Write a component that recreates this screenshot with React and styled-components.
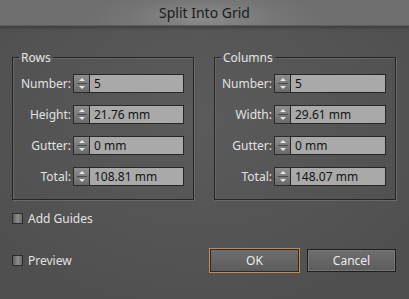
import React from 'react';
import styled, { createGlobalStyle } from 'styled-components';

const GlobalStyle = createGlobalStyle`
  html, body { margin: 0; padding: 0; background: #535353; }
  body { font-family: "Noto Sans", "DejaVu Sans", sans-serif; }
`;

const Window = styled.div`
  width: 409px;
  height: 299px;
  display: flex;
  flex-direction: column;
  background: radial-gradient(ellipse 260px 200px at 200px 120px, #5b5b5b 0%, #535353 70%, #4f4f4f 100%);
  overflow: hidden;
`;

const TitleBar = styled.div`
  height: 25px;
  flex: none;
  display: flex;
  align-items: center;
  justify-content: center;
  background: radial-gradient(ellipse 120px 30px at 204px 18px, #8c8c8c 0%, #767676 60%, #6e6e6e 100%);
  border-bottom: 1px solid #5e5e5e;
  box-shadow: 0 2px 3px rgba(0, 0, 0, 0.25);
  color: #1a1a1a;
  font-size: 14px;
`;

const Body = styled.div`
  flex: 1;
  padding: 23px 13px 0 12px;
  display: flex;
  flex-direction: column;
`;

const Panels = styled.div`
  display: grid;
  grid-template-columns: 182px 182px;
  column-gap: 20px;
`;

const Group = styled.fieldset`
  margin: 0;
  padding: 8px 9px 13px 0;
  border: 1px solid #262626;
  box-shadow: 1px 1px 0 #6a6a6a, inset 1px 1px 0 #666;
  display: flex;
  flex-direction: column;
  gap: 12px;
  min-width: 0;
`;

const Legend = styled.legend`
  color: #e4e4e4;
  font-size: 12px;
  padding: 0 2px;
  margin-left: 6px;
`;

const Field = styled.div`
  display: flex;
  align-items: center;
  height: 19px;
`;

const Label = styled.label`
  width: ${(p) => p.$w}px;
  flex: none;
  text-align: right;
  padding-right: 2px;
  box-sizing: border-box;
  color: #e2e2e2;
  font-size: 12px;
`;

const Spinner = styled.div`
  width: 16px;
  height: 19px;
  flex: none;
  box-sizing: border-box;
  border: 1px solid #2a2a2a;
  border-right: none;
  background: linear-gradient(#8e8e8e, #6a6a6a);
  display: flex;
  align-items: center;
  justify-content: center;
`;

const Input = styled.div`
  flex: 1;
  height: 19px;
  box-sizing: border-box;
  border: 1px solid #262626;
  background: #a9a9a9;
  color: #141414;
  font-size: 12px;
  line-height: 17px;
  padding-left: 4px;
`;

const Options = styled.div`
  display: flex;
  flex-direction: column;
  margin-top: 12px;
`;

const CheckRow = styled.div`
  display: flex;
  align-items: center;
  gap: 5px;
  color: #e2e2e2;
  font-size: 12px;
  height: 12px;
`;

const Box = styled.span`
  width: 11px;
  height: 11px;
  box-sizing: border-box;
  border: 1px solid #2c2c2c;
  background: linear-gradient(90deg, #5c5c5c, #8c8c8c 50%, #6a6a6a);
`;

const Footer = styled.div`
  display: flex;
  align-items: center;
  justify-content: space-between;
  margin-top: 24px;
`;

const Buttons = styled.div`
  display: flex;
  align-items: center;
  gap: 7px;
`;

const Button = styled.button`
  width: ${(p) => (p.$default ? 91 : 89)}px;
  height: ${(p) => (p.$default ? 25 : 23)}px;
  box-sizing: border-box;
  border: 1px solid ${(p) => (p.$default ? '#c98a4a' : '#1e1e1e')};
  box-shadow: ${(p) => (p.$default ? 'inset 0 0 0 1px #2a2a2a' : 'inset 0 0 0 1px #777')};
  background: linear-gradient(#6e6e6e, #5c5c5c);
  color: #ececec;
  font-family: "Noto Sans", "DejaVu Sans", sans-serif;
  font-size: 12px;
  padding: 0;
`;

const Arrows = () => (
  <svg width="14" height="17" viewBox="0 0 14 17">
    <path d="M4 6 L7 3 L10 6 Z" fill="#e6e6e6" />
    <line x1="2" y1="8.5" x2="12" y2="8.5" stroke="#4a4a4a" />
    <path d="M4 11 L7 14 L10 11 Z" fill="#e6e6e6" />
  </svg>
);

const NumField = ({ label, value, w }) => (
  <Field>
    <Label $w={w}>{label}</Label>
    <Spinner>
      <Arrows />
    </Spinner>
    <Input>{value}</Input>
  </Field>
);

const rows = [
  ['Number:', '5'],
  ['Height:', '21.76 mm'],
  ['Gutter:', '0 mm'],
  ['Total:', '108.81 mm'],
];

const cols = [
  ['Number:', '5'],
  ['Width:', '29.61 mm'],
  ['Gutter:', '0 mm'],
  ['Total:', '148.07 mm'],
];

export default function App() {
  return (
    <>
      <GlobalStyle />
      <Window>
        <TitleBar>Split Into Grid</TitleBar>
        <Body>
          <Panels>
            <Group>
              <Legend>Rows</Legend>
              {rows.map(([l, v]) => (
                <NumField key={l} label={l} value={v} w={60} />
              ))}
            </Group>
            <Group>
              <Legend>Columns</Legend>
              {cols.map(([l, v]) => (
                <NumField key={l} label={l} value={v} w={59} />
              ))}
            </Group>
          </Panels>
          <Options>
            <CheckRow>
              <Box />
              Add Guides
            </CheckRow>
            <Footer>
              <CheckRow>
                <Box />
                Preview
              </CheckRow>
              <Buttons>
                <Button $default>OK</Button>
                <Button>Cancel</Button>
              </Buttons>
            </Footer>
          </Options>
        </Body>
      </Window>
    </>
  );
}
